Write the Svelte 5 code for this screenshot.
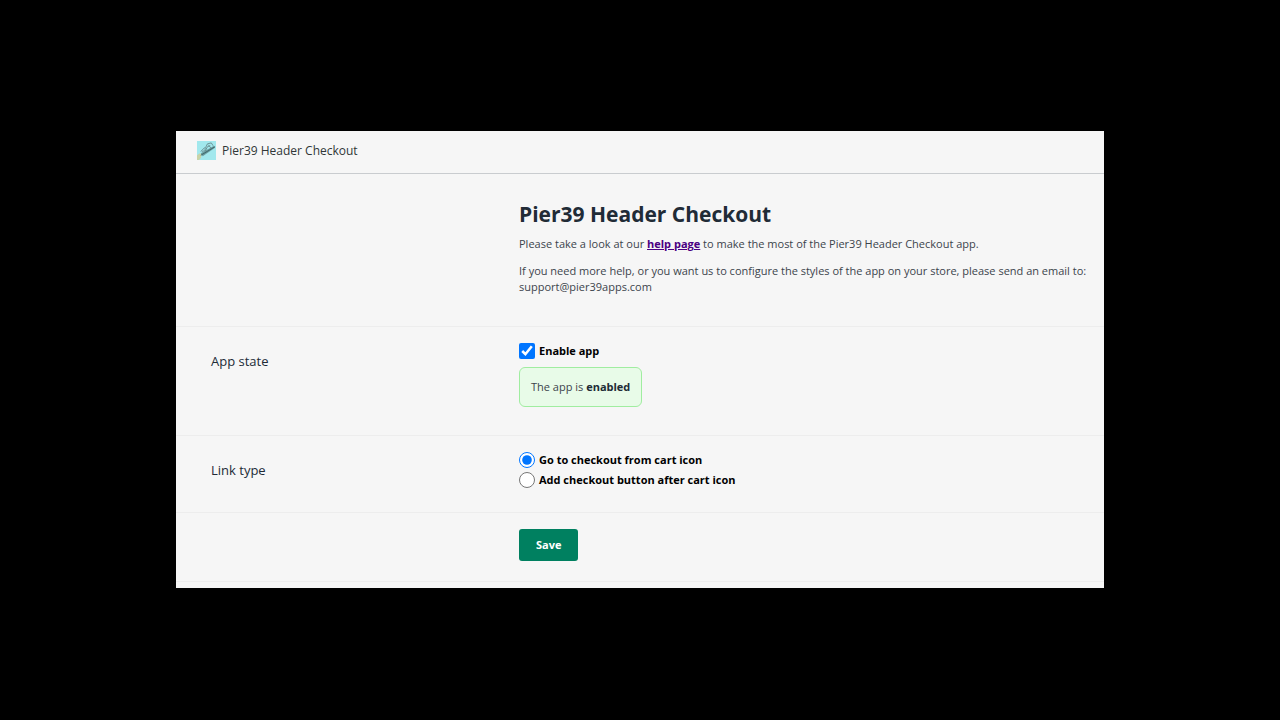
<script>
  let enabled = true;
  let linkType = 'cart';

  const linkTypes = [
    { value: 'cart', label: 'Go to checkout from cart icon' },
    { value: 'button', label: 'Add checkout button after cart icon' }
  ];
</script>

<main class="page">
  <div class="app-frame">
    <header class="app-header">
      <svg class="app-logo" viewBox="0 0 20 20" aria-hidden="true">
        <rect width="20" height="20" fill="#a2e8ed" />
        <path d="M0 15l3-2 2 1-1 4-2 2H0z" fill="#c9d3a8" />
        <path d="M4 13L18 5l1 2L6 16z" fill="#6a9c9e" />
        <path d="M4 11l4-4 2 1M9 7l2-4 4-1 2 3M5 11l4-1 2-4 3-1M8 8l2 4M12 4l3 4" fill="none" stroke="#6a9092" />
        <path d="M4 15L19 6" fill="none" stroke="#3c6669" />
      </svg>
      <span>Pier39 Header Checkout</span>
    </header>

    <form on:submit|preventDefault>
      <section class="row intro">
        <div class="content">
          <h1>Pier39 Header Checkout</h1>
          <p>Please take a look at our <a href="/help">help page</a> to make the most of the Pier39 Header Checkout app.</p>
          <p>If you need more help, or you want us to configure the styles of the app on your store, please send an email to: support@pier39apps.com</p>
        </div>
      </section>

      <section class="row state">
        <h2>App state</h2>
        <div class="content">
          <label class="option">
            <input type="checkbox" bind:checked={enabled} />
            Enable app
          </label>
          <div class="status" class:off={!enabled}>
            The app is <strong>{enabled ? 'enabled' : 'disabled'}</strong>
          </div>
        </div>
      </section>

      <section class="row links">
        <h2>Link type</h2>
        <div class="content">
          {#each linkTypes as type}
            <label class="option">
              <input type="radio" name="link-type" value={type.value} bind:group={linkType} />
              {type.label}
            </label>
          {/each}
        </div>
      </section>

      <section class="row actions">
        <div class="content">
          <button type="submit">Save</button>
        </div>
      </section>
    </form>
  </div>
</main>

<style>
:global(body) {
  background: #000;
}
.page {
  box-sizing: border-box;
  min-height: 100vh;
  padding-bottom: 1px;
  display: flex;
  align-items: center;
  justify-content: center;
  font-family: "Open Sans", "Noto Sans", sans-serif;
  font-size: 11px;
  line-height: 16px;
  color: #3c444c;
}
.app-frame {
  width: 100%;
  max-width: 928px;
  padding-bottom: 6px;
  background: #f6f6f6;
}
.app-header {
  display: flex;
  align-items: center;
  gap: 6px;
  padding: 9px 21px 12px;
  border-bottom: 1px solid #c9cccf;
  font-size: 12px;
  line-height: 21px;
  color: #303638;
}
.app-logo {
  width: 19px;
  height: 19px;
}
.row {
  display: grid;
  grid-template-columns: 308px 1fr;
  padding: 16px 16px 28px 35px;
  border-bottom: 1px solid #ededed;
}
.content {
  grid-column: 2;
}
.intro {
  padding-top: 24px;
  padding-bottom: 20px;
}
h1 {
  margin: 0 0 6px;
  font-size: 21px;
  line-height: 32px;
  font-weight: 700;
  color: #212b36;
}
h2 {
  margin: 8px 0 0;
  font-size: 13px;
  line-height: 20px;
  font-weight: 500;
  color: #212b36;
}
p {
  margin: 0 0 11px;
}
a {
  color: #4b0082;
  font-weight: 700;
}
.option {
  display: flex;
  align-items: center;
  gap: 4px;
  width: fit-content;
  min-height: 16px;
  margin-bottom: 4px;
  color: #000;
  font-weight: 700;
}
.option input {
  width: 16px;
  height: 16px;
  margin: 0;
}
.status {
  width: fit-content;
  margin-top: 8px;
  padding: 11px;
  border: 1px solid #a0eda0;
  border-radius: 6px;
  background: #e8fbe8;
}
.status strong {
  color: #212b36;
}
.status.off {
  border-color: #eda0a0;
  background: #fbe8e8;
}
.links {
  padding-bottom: 20px;
}
.actions {
  padding-bottom: 20px;
}
button {
  display: block;
  padding: 8px 17px;
  border: 0;
  border-radius: 3px;
  background: #008060;
  color: #fff;
  font: inherit;
  font-weight: 700;
  cursor: pointer;
}
button:hover {
  background: #006e52;
}
</style>
